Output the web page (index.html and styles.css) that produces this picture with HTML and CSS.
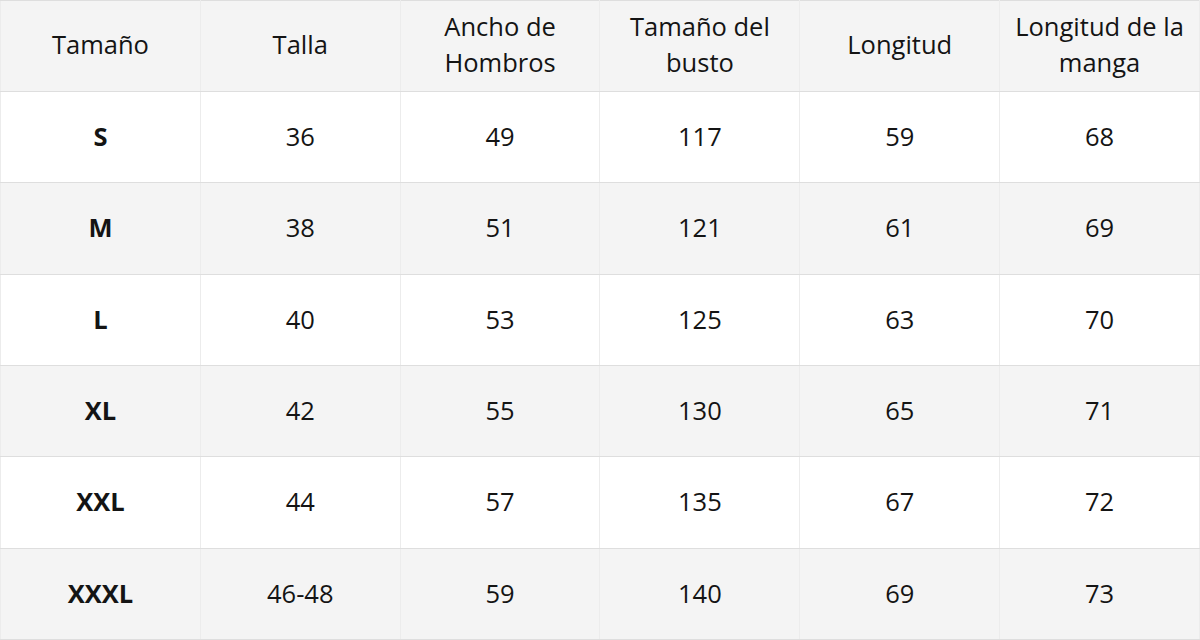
FILE: index.html
```html
<!DOCTYPE html>
<html lang="es">
<head>
<meta charset="utf-8">
<title>Tabla de tallas</title>
<link rel="stylesheet" href="styles.css">
</head>
<body>
<table class="size-table">
  <thead>
    <tr>
      <th>Tamaño</th>
      <th>Talla</th>
      <th>Ancho de<br>Hombros</th>
      <th>Tamaño del<br>busto</th>
      <th>Longitud</th>
      <th>Longitud de la<br>manga</th>
    </tr>
  </thead>
  <tbody>
    <tr><td class="size">S</td><td>36</td><td>49</td><td>117</td><td>59</td><td>68</td></tr>
    <tr><td class="size">M</td><td>38</td><td>51</td><td>121</td><td>61</td><td>69</td></tr>
    <tr><td class="size">L</td><td>40</td><td>53</td><td>125</td><td>63</td><td>70</td></tr>
    <tr><td class="size">XL</td><td>42</td><td>55</td><td>130</td><td>65</td><td>71</td></tr>
    <tr><td class="size">XXL</td><td>44</td><td>57</td><td>135</td><td>67</td><td>72</td></tr>
    <tr><td class="size">XXXL</td><td>46-48</td><td>59</td><td>140</td><td>69</td><td>73</td></tr>
  </tbody>
</table>
</body>
</html>
```
FILE: styles.css
```css
html, body {
  margin: 0;
  padding: 0;
  background: #ffffff;
}
.size-table {
  width: 1200px;
  height: 640px;
  border-collapse: collapse;
  table-layout: fixed;
  font-family: "Open Sans", "Liberation Sans", sans-serif;
  font-size: 25.5px;
  line-height: 36px;
  color: #141414;
}
.size-table th,
.size-table td {
  height: 88px;
  padding: 0 0 2px;
  text-align: center;
  vertical-align: middle;
  font-weight: 400;
  border-top: 1px solid #dedede;
  border-bottom: 1px solid #dedede;
  border-left: 1px solid #ececec;
  border-right: 1px solid #ececec;
}
.size-table th {
  height: 86px;
  padding-bottom: 4px;
}
.size-table thead tr {
  background: #f4f4f4;
}
.size-table tbody tr:nth-child(even) {
  background: #f4f4f4;
}
.size-table td.size {
  font-weight: 700;
}
```
